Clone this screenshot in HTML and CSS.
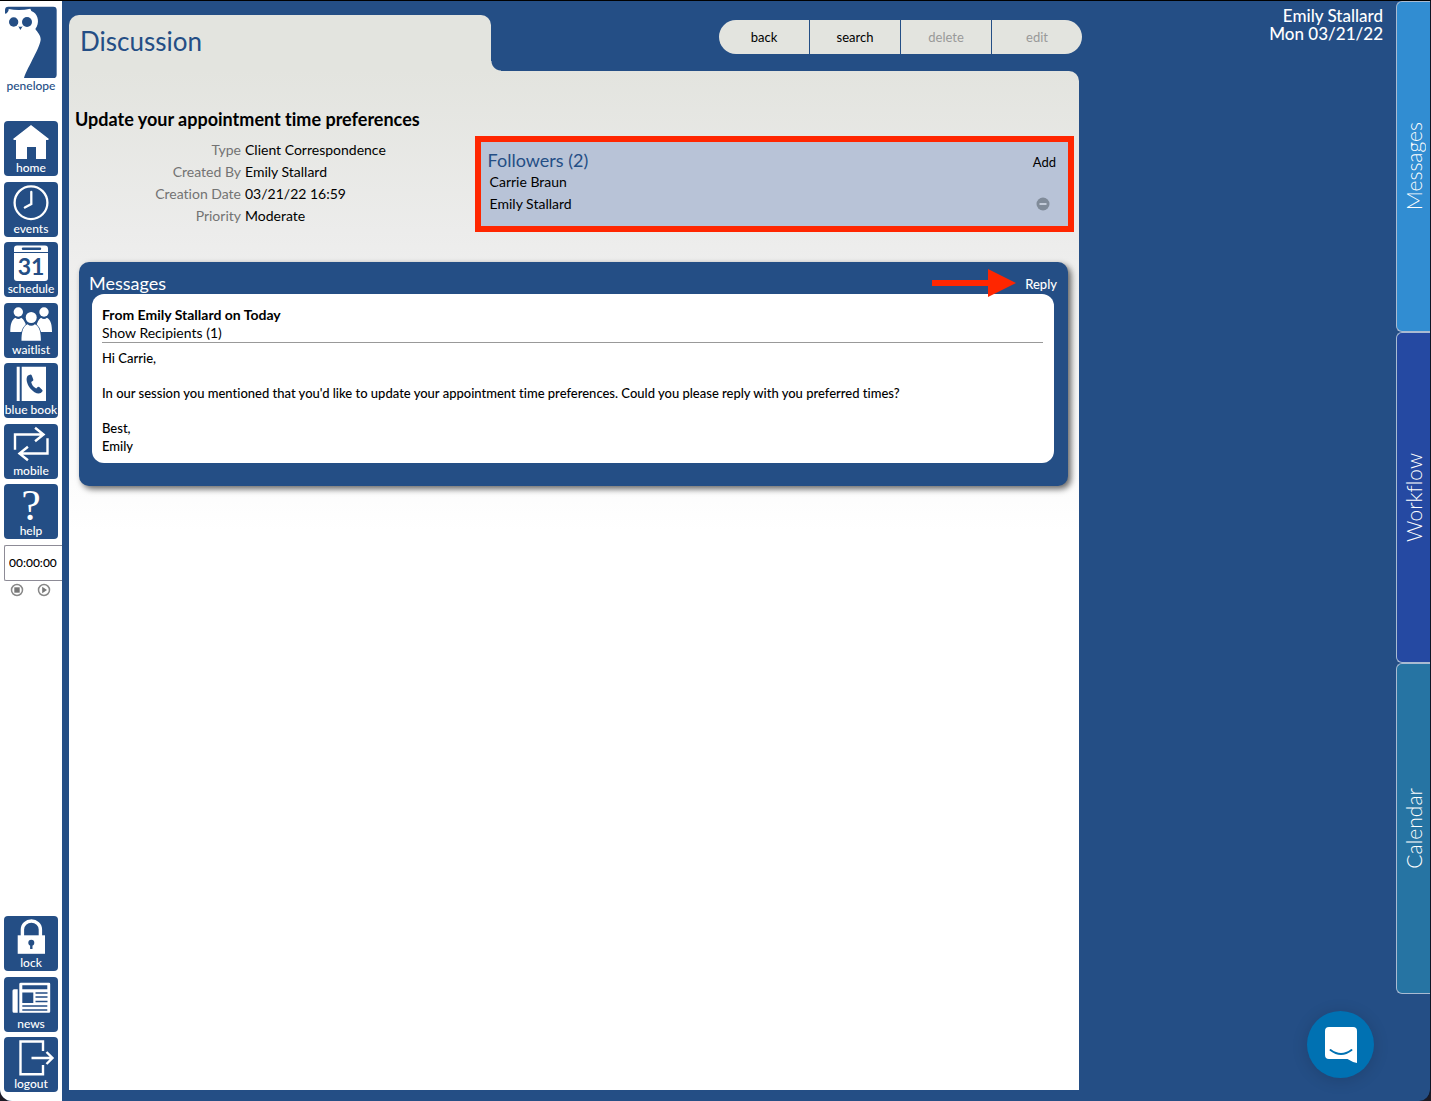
FILE: index.html
```html
<!DOCTYPE html>
<html lang="en">
<head>
<meta charset="utf-8">
<meta name="viewport" content="width=device-width, initial-scale=1">
<title>Discussion - Penelope</title>
<link rel="stylesheet" href="styles.css">
</head>
<body>
<div class="app">
  <nav class="sidebar" aria-label="Main">
    <a class="logo" href="#">
      <svg viewBox="12 15 162 222" width="54" height="74" fill="#244e85" aria-hidden="true">
        <path d="M25 20H160q10 0 10 10V224q0 10-10 10H72C84 200 122 140 122 118C122 105 112 96 106 87C120 70 114 45 101 37Q92 34 91 26Q58 34 26 27Q27 34 17 42L15 39V30q0-10 10-10z"/>
        <circle cx="41" cy="66" r="14"/><circle cx="81" cy="66" r="15"/><path d="M55 79q6 3 13 0l-7 11z"/>
      </svg>
      <span>penelope</span>
    </a>
    <div class="nav-group nav-main">
      <a class="tile" href="#">
        <svg viewBox="0 0 54 39" aria-hidden="true"><path fill="#fff" d="M27 4l18 14-1 1h-2v19H32V26h-9v12H12V19h-2l-1-1z"/></svg>
        <span>home</span>
      </a>
      <a class="tile" href="#">
        <svg viewBox="0 0 54 39" aria-hidden="true" fill="none" stroke="#fff" stroke-width="2.3"><circle cx="27" cy="20.7" r="16.4"/><path d="M27.3 10v12l-6.500 3.500" stroke-linecap="round"/></svg>
        <span>events</span>
      </a>
      <a class="tile" href="#">
        <svg viewBox="0 0 54 39" aria-hidden="true"><path fill="#fff" d="M13 3.500h28q3 0 3 3V36q0 3-3 3H13q-3 0-3-3V6.500q0-3 3-3z"/><path stroke="#244e85" stroke-width="2.400" stroke-linecap="round" d="M19 6.800h17"/><path stroke="#244e85" d="M10 10.500h34"/><text class="icon-day" x="27" y="33" text-anchor="middle">31</text></svg>
        <span>schedule</span>
      </a>
      <a class="tile" href="#">
        <svg viewBox="0 0 54 39" aria-hidden="true" fill="#fff"><circle cx="14.300" cy="9" r="4.700"/><circle cx="40" cy="9" r="4.700"/><circle cx="27.200" cy="14.500" r="5.500"/><path d="M17.500 37.700c0-8 1-14 6-16.500q3.700 3 7.400 0c5 2.500 6 8.500 6 16.500zM6.300 29c0-7 1-12 5-14.300q3 2.400 6 0 2 1.300 3 3.500l1.500 3q-3 2.800-4.500 7.800zM48 29c0-7-1-12-5-14.300q-3 2.400-6 0-2 1.300-3 3.500l-1.300 3q3 2.800 4.300 7.800z"/></svg>
        <span>waitlist</span>
      </a>
      <a class="tile" href="#">
        <svg viewBox="0 0 54 39" aria-hidden="true"><path fill="#fff" d="M12.700 3.700h3V38h-3zM17.700 3.700H42V38H17.700z"/><path fill="#244e85" d="M24 12.500l2.500-1q.8 0 1.300 1l1.500 4q.2 1-.7 1.500l-1.400 1q1 4.500 5 6.500l1.500-1.500q.8-.6 1.600 0l3 3q.7.900 0 1.600l-1.500 1.400c-3 1.500-7-.5-10.500-4.500-3.500-4.500-5-10.500-2.300-13z"/></svg>
        <span>blue book</span>
      </a>
      <a class="tile" href="#">
        <svg viewBox="0 0 54 39" aria-hidden="true" fill="none" stroke="#fff" stroke-width="2.400"><path d="M11 24.500V10.500h28M32 4.500l7.500 6-7.500 6M43.500 15.500v14H16M23 23.500l-7.500 6 7.500 6" stroke-linecap="square"/></svg>
        <span>mobile</span>
      </a>
      <a class="tile" href="#">
        <svg viewBox="0 0 54 39" aria-hidden="true"><text class="icon-help" x="27" y="36" text-anchor="middle">?</text></svg>
        <span>help</span>
      </a>
    </div>
    <div class="timer">
      <input type="text" value="00:00:00" aria-label="Timer">
      <div class="timer-controls">
        <button type="button" aria-label="Stop"><svg viewBox="0 0 14 14" aria-hidden="true"><circle cx="7" cy="7" r="5.500" fill="none" stroke="#888" stroke-width="1.500"/><path fill="#777" d="M4.300 4.300h5.400v5.400H4.300z"/></svg></button>
        <button type="button" aria-label="Start"><svg viewBox="0 0 14 14" aria-hidden="true"><circle cx="7" cy="7" r="5.500" fill="none" stroke="#888" stroke-width="1.500"/><path fill="#777" d="M5.200 3.800L10 7l-4.800 3.200z"/></svg></button>
      </div>
    </div>
    <div class="nav-group nav-session">
      <a class="tile" href="#">
        <svg viewBox="0 0 54 39" aria-hidden="true"><path fill="#fff" d="M13.700 19.300H41v18.500H13.700z"/><path fill="none" stroke="#fff" stroke-width="3.400" d="M18.400 20v-6.500a9 8.500 0 0 1 18 0V20"/><circle cx="27.300" cy="26.700" r="3" fill="#244e85"/><path stroke="#244e85" stroke-width="2.400" d="M27.300 27v6"/></svg>
        <span>lock</span>
      </a>
      <a class="tile" href="#">
        <svg viewBox="0 0 54 39" aria-hidden="true"><path fill="#fff" d="M10 12.300h3.700v23.400H10q-1.500 0-1.500-1.500V13.800q0-1.500 1.500-1.500zM17 5.700h28q1.200 0 1.200 1.200v27.600q0 1.200-1.200 1.200H15.300V6.900q0-1.200 1.700-1.200z"/><path fill="#244e85" d="M18.300 8.300h25v4h-25zM18.300 15.500h11v10.500h-11z"/><path stroke="#244e85" stroke-width="1.700" d="M31.500 16h12M31.500 20h12M31.500 24.500h12M18.300 29h25M18.300 33h25"/></svg>
        <span>news</span>
      </a>
      <a class="tile" href="#">
        <svg viewBox="0 0 54 39" aria-hidden="true" fill="none" stroke="#fff" stroke-width="2.400"><path d="M39 14V4.500H16.500v32.700H39V28"/><path d="M27.500 21H48M42.500 15l6 6-6 6"/></svg>
        <span>logout</span>
      </a>
    </div>
  </nav>

  <main class="main">
    <header class="page-head">
      <h1 class="page-tab">Discussion</h1>
      <div class="toolbar">
        <button type="button">back</button>
        <button type="button">search</button>
        <button type="button" disabled>delete</button>
        <button type="button" disabled>edit</button>
      </div>
    </header>
    <div class="panel">
      <h2 class="subject">Update your appointment time preferences</h2>
      <div class="summary">
        <dl class="details">
          <dt>Type</dt><dd>Client Correspondence</dd>
          <dt>Created By</dt><dd>Emily Stallard</dd>
          <dt>Creation Date</dt><dd>03/21/22 16:59</dd>
          <dt>Priority</dt><dd>Moderate</dd>
        </dl>
        <section class="followers">
          <div class="followers-head">
            <h3>Followers (2)</h3>
            <a href="#">Add</a>
          </div>
          <ul>
            <li>Carrie Braun</li>
            <li>Emily Stallard
              <button type="button" aria-label="Remove Emily Stallard"><svg viewBox="0 0 14 14" aria-hidden="true"><circle cx="7" cy="7" r="6.500" fill="#808b99"/><path stroke="#c3cbd9" stroke-width="2" d="M3.500 7h7"/></svg></button>
            </li>
          </ul>
        </section>
      </div>
      <section class="messages">
        <div class="messages-head">
          <h3>Messages</h3>
          <svg class="arrow" viewBox="0 0 84 28" aria-hidden="true"><path fill="#ff2600" d="M0 11h56V0l28 14-28 14V17H0z"/></svg>
          <a href="#">Reply</a>
        </div>
        <article class="message">
          <header>
            <h4>From Emily Stallard on Today</h4>
            <a href="#">Show Recipients (1)</a>
          </header>
          <div class="message-body">
            <p>Hi Carrie,</p>
            <p>In our session you mentioned that you'd like to update your appointment time preferences. Could you please reply with you preferred times?</p>
            <p>Best,<br>Emily</p>
          </div>
        </article>
      </section>
    </div>
  </main>

  <aside class="side">
    <div class="user">Emily Stallard<br>Mon 03/21/22</div>
    <div class="side-tabs">
      <button type="button" class="tab-messages"><span>Messages</span></button>
      <button type="button" class="tab-workflow"><span>Workflow</span></button>
      <button type="button" class="tab-calendar"><span>Calendar</span></button>
    </div>
  </aside>

  <button type="button" class="chat" aria-label="Open chat">
    <svg viewBox="0 0 32 36" aria-hidden="true"><path fill="#fff" d="M4 0h24q4 0 4 4v32q-5-1-9.500-4H4q-4 0-4-4V4q0-4 4-4z"/><path fill="none" stroke="#0071b2" stroke-width="2" stroke-linecap="round" d="M5.500 23q10.500 8 21 0"/></svg>
  </button>
</div>
</body>
</html>
```
FILE: styles.css
```css
:root {
  --blue: #244e85;
  --paper: #e3e4df;
  --red: #ff2600;
}

* {
  box-sizing: border-box;
}

body {
  margin: 0;
  background: #1d1a24;
  color: #000;
  font: 14px/18px Lato, "Liberation Sans", sans-serif;
  font-variant-ligatures: none;
}

h1, h2, h3, h4, p, ul, dl, dd {
  margin: 0;
  padding: 0;
}

h1, h3 {
  font-weight: 400;
}

a {
  color: inherit;
  text-decoration: none;
}

button {
  padding: 0;
  border: 0;
  background: none;
  color: inherit;
  font: inherit;
  cursor: pointer;
}

svg {
  display: block;
}

.app {
  position: relative;
  display: grid;
  grid-template-columns: 62px minmax(0, 1fr) 348px;
  min-height: 100vh;
  overflow: hidden;
  border-top: 1px solid #000;
  border-right: 1px solid #0d1526;
  border-radius: 0 0 12px 12px;
  background: var(--blue);
}

/* Sidebar */

.sidebar {
  display: flex;
  flex-direction: column;
  padding: 4px 0 9px 4px;
  background: #fff;
  font-size: 12px;
  font-weight: 500;
}

.logo {
  display: flex;
  flex-direction: column;
  align-items: center;
  width: 54px;
  height: 116px;
  color: var(--blue);
  line-height: 14px;
}

.nav-group {
  display: flex;
  flex-direction: column;
  justify-content: space-between;
  width: 54px;
}

.nav-main {
  height: 418px;
}

.nav-session {
  height: 176px;
  margin-top: auto;
}

.tile {
  display: flex;
  flex-direction: column;
  align-items: center;
  height: 55px;
  border-radius: 4px;
  background: var(--blue);
  color: #fff;
  line-height: 15px;
  white-space: nowrap;
}

.tile svg {
  width: 54px;
  height: 39px;
}

.icon-day {
  fill: var(--blue);
  font: 700 23px Lato, sans-serif;
}

.icon-help {
  fill: #fff;
  font: 44px "Liberation Serif", serif;
}

.timer {
  margin-top: 6px;
}

.timer input {
  display: block;
  width: 58px;
  height: 36px;
  padding: 0 0 1px 4px;
  border: 1px solid #8d8b96;
  border-right: 0;
  border-radius: 2px 0 0 2px;
  font: 500 12px Lato, sans-serif;
}

.timer-controls {
  display: flex;
  gap: 13px;
  padding: 2px 6px;
}

.timer-controls svg {
  width: 14px;
  height: 14px;
}

/* Discussion page */

.main {
  display: flex;
  flex-direction: column;
  padding: 14px 0 11px 7px;
}

.page-head {
  display: flex;
  justify-content: space-between;
  height: 56px;
}

.page-tab {
  position: relative;
  width: 422px;
  padding: 8px 11px;
  border-radius: 10px 10px 0 0;
  background: var(--paper);
  color: var(--blue);
  font-size: 26px;
  line-height: 36px;
}

.page-tab::after {
  content: "";
  position: absolute;
  bottom: 0;
  left: 100%;
  width: 10px;
  height: 10px;
  background: radial-gradient(circle at 100% 0, transparent 9px, var(--paper) 10px);
}

.toolbar {
  display: flex;
  gap: 1px;
  height: 34px;
  margin-top: 5px;
  overflow: hidden;
  border-radius: 17px;
}

.toolbar button {
  width: 90px;
  background: var(--paper);
  font-size: 13px;
}

.toolbar button:disabled {
  color: #999;
  cursor: default;
}

.panel {
  flex: 1;
  margin-right: 3px;
  padding: 36px 5px 24px 6px;
  border-radius: 0 10px 0 0;
  background: linear-gradient(var(--paper) 0, #ececeb 160px, #fff 460px);
}

.subject {
  font-size: 18px;
  font-weight: 700;
  line-height: 24px;
}

.summary {
  display: grid;
  grid-template-columns: 2fr 3fr;
  margin-top: 5px;
}

.details {
  display: grid;
  grid-template-columns: 166px 1fr;
  align-content: start;
  gap: 0 4px;
  padding-top: 3px;
  line-height: 22px;
}

.details dt {
  color: #737373;
  text-align: right;
}

.followers {
  height: 96px;
  padding: 9px 12px 0 7px;
  border: 6px solid var(--red);
  background: #b8c3d7;
  line-height: 22px;
}

.followers-head {
  display: flex;
  justify-content: space-between;
  height: 20px;
  line-height: 18px;
}

.followers h3 {
  color: var(--blue);
  font-size: 18px;
}

.followers a {
  font-size: 13px;
  line-height: 22px;
}

.followers ul {
  padding: 0 6px 0 2px;
  list-style: none;
}

.followers li {
  display: flex;
  align-items: center;
  justify-content: space-between;
}

.followers li svg {
  width: 14px;
  height: 14px;
}

.messages {
  margin: 30px 6px 0 4px;
  padding: 10px 14px 23px 13px;
  border-radius: 10px;
  background: var(--blue);
  box-shadow: 3px 3px 6px rgba(0, 0, 0, 0.6);
}

.messages-head {
  display: flex;
  align-items: center;
  height: 22px;
  margin: 0 -3px;
  color: #fff;
}

.messages-head h3 {
  margin-right: auto;
  font-size: 18px;
}

.messages-head a {
  padding-top: 2px;
  font-size: 13px;
  font-weight: 500;
}

.arrow {
  width: 84px;
  height: 28px;
  margin-right: 9px;
}

.message {
  padding: 12px 11px 8px 10px;
  border-radius: 12px;
  background: #fff;
}

.message header {
  margin-bottom: 6px;
  border-bottom: 1px solid #999;
}

.message h4 {
  font-size: 14px;
}

.message-body {
  font-size: 13px;
  font-weight: 500;
}

.message p + p {
  margin-top: 17px;
}

/* Right side */

.side {
  display: flex;
  justify-content: flex-end;
  gap: 13px;
}

.user {
  padding-top: 6px;
  color: #fff;
  font-size: 17px;
  font-weight: 500;
  line-height: 18px;
  text-align: right;
}

.side-tabs {
  display: flex;
  flex-direction: column;
  width: 34px;
}

.side-tabs button {
  display: flex;
  align-items: center;
  justify-content: center;
  height: 331px;
  border: 1px solid #a9bbd2;
  border-right: 0;
  border-radius: 6px 0 0 6px;
  color: #fff;
  font-size: 21px;
  font-weight: 300;
}

.side-tabs span {
  writing-mode: vertical-rl;
  transform: rotate(180deg);
}

.side-tabs .tab-messages {
  background: #318dd2;
}

.side-tabs .tab-workflow {
  background: #2549a2;
}

.side-tabs .tab-calendar {
  background: #2674a3;
}

.chat {
  position: absolute;
  right: 56px;
  bottom: 23px;
  display: flex;
  align-items: center;
  justify-content: center;
  width: 67px;
  height: 67px;
  border-radius: 50%;
  background: #0071b2;
  box-shadow: 0 2px 16px rgba(0, 0, 0, 0.15);
}

.chat svg {
  width: 32px;
  height: 36px;
}
```
